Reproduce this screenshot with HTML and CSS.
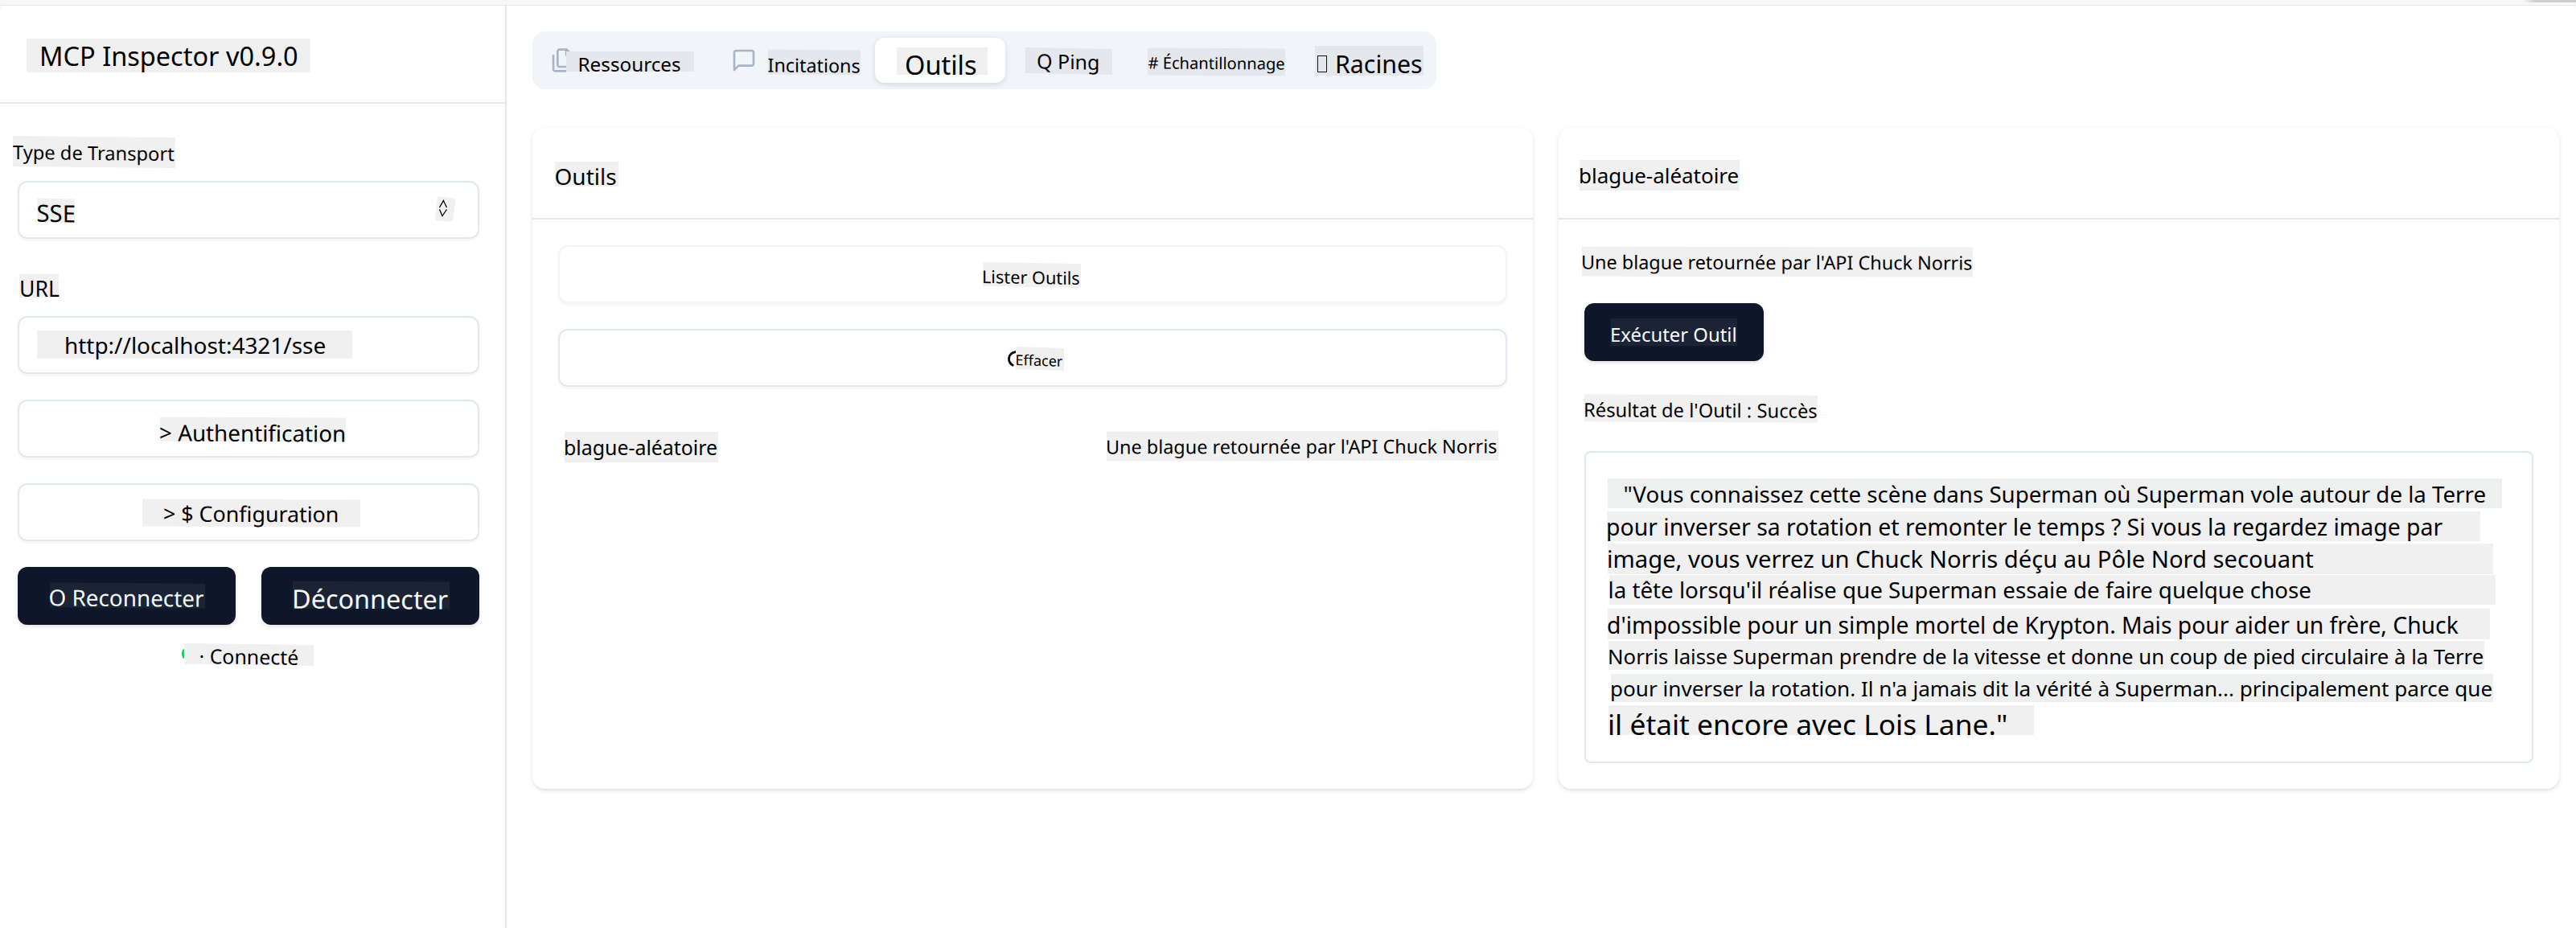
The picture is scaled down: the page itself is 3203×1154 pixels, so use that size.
FILE: index.html
```html
<!DOCTYPE html>
<html lang="fr">
<head>
<meta charset="utf-8">
<title>MCP Inspector</title>
<link rel="stylesheet" href="styles.css">
</head>
<body>
<div class="chrome"><span class="chrome-shade"></span></div>
<div class="app">
  <aside class="sidebar">
    <header class="brand"><h1 class="label l-brand">MCP Inspector v0.9.0</h1></header>
    <div class="form">
      <label class="label l-transport">Type de Transport</label>
      <div class="field">
        <span class="label l-sse">SSE</span>
        <svg class="chevrons" viewBox="0 0 26 32" width="26" height="32"><path fill="#f0f0f0" d="M3.3 0 25.5 3 22 31.500 0 30z"/><path fill="none" stroke="#000" stroke-width="1.300" d="M5.500 14 10.400 5.500 14.500 14M5.500 16.500 9 24.500 14.500 16.500"/></svg>
      </div>
      <label class="label l-url">URL</label>
      <div class="field"><span class="label l-http">http://localhost:4321/sse</span></div>
      <button class="field field-gap"><span class="label l-auth">&gt; Authentification</span></button>
      <button class="field field-gap"><span class="label l-config">&gt; $ Configuration</span></button>
      <div class="actions">
        <button class="primary"><span class="label l-reconnect">O Reconnecter</span></button>
        <button class="primary"><span class="label l-disconnect">Déconnecter</span></button>
      </div>
      <div class="status"><span class="status-dot"></span><span class="label l-status">· Connecté</span></div>
    </div>
  </aside>
  <main class="main">
    <nav class="tabs">
      <span class="tab tab-files">
        <svg class="icon" viewBox="0 0 24 24" width="32" height="32"><path d="M15.500 2H8.600c-.4 0-.8.2-1.100.5-.3.3-.5.7-.5 1.100v12.800c0 .4.2.8.500 1.100.3.3.7.500 1.100.500h9.800c.4 0 .8-.2 1.100-.500.3-.3.500-.7.500-1.100V6.500z"/><path d="M3 7.600v12.800c0 .4.200.8.500 1.100.3.300.7.500 1.100.500h9.800"/><path d="M15 2v5h5"/></svg>
        <span class="label l-resources">Ressources</span>
      </span>
      <span class="tab tab-prompts">
        <svg class="icon" viewBox="0 0 24 24" width="32" height="32"><path d="M21 15a2 2 0 0 1-2 2H7l-4 4V5a2 2 0 0 1 2-2h14a2 2 0 0 1 2 2z"/></svg>
        <span class="label l-prompts">Incitations</span>
      </span>
      <span class="tab tab-active"><span class="label l-tools">Outils</span></span>
      <span class="label l-ping">Q Ping</span>
      <span class="label l-sampling"># Échantillonnage</span>
      <span class="label l-roots"><i class="glyph-box"></i>Racines</span>
    </nav>
    <div class="cards">
      <section class="card">
        <header class="card-head"><h2 class="label l-head-tools">Outils</h2></header>
        <div class="card-body">
          <button class="field field-light"><span class="label l-list">Lister Outils</span></button>
          <button class="field field-gap">
            <svg class="arc" viewBox="0 0 11 20" width="11" height="20"><path fill="none" stroke="#020817" stroke-width="2.800" d="M11 1.300C4 2.500 1.400 6 1.400 10c0 4 2 7 5.800 8.700"/></svg>
            <span class="label l-clear">Effacer</span>
          </button>
          <div class="tool-row">
            <span class="label l-tool">blague-aléatoire</span>
            <span class="label l-tool-desc">Une blague retournée par l'API Chuck Norris</span>
          </div>
        </div>
      </section>
      <section class="card">
        <header class="card-head"><h2 class="label l-head-joke">blague-aléatoire</h2></header>
        <div class="card-body">
          <p class="label l-desc">Une blague retournée par l'API Chuck Norris</p>
          <button class="primary run"><span class="label l-run">Exécuter Outil</span></button>
          <h3 class="label l-result">Résultat de l'Outil : Succès</h3>
          <div class="result">
            <span class="label r1">"Vous connaissez cette scène dans Superman où Superman vole autour de la Terre</span>
            <span class="label r2">pour inverser sa rotation et remonter le temps ? Si vous la regardez image par</span>
            <span class="label r3">image, vous verrez un Chuck Norris déçu au Pôle Nord secouant</span>
            <span class="label r4">la tête lorsqu'il réalise que Superman essaie de faire quelque chose</span>
            <span class="label r5">d'impossible pour un simple mortel de Krypton. Mais pour aider un frère, Chuck</span>
            <span class="label r6">Norris laisse Superman prendre de la vitesse et donne un coup de pied circulaire à la Terre</span>
            <span class="label r7">pour inverser la rotation. Il n'a jamais dit la vérité à Superman... principalement parce que</span>
            <span class="label r8">il était encore avec Lois Lane."</span>
          </div>
        </div>
      </section>
    </div>
  </main>
</div>
</body>
</html>
```
FILE: styles.css
```css
* { box-sizing: border-box; }
body {
  margin: 0;
  height: 1154px;
  overflow: hidden;
  background: #f7f7f7;
  color: #000;
  font-family: "Noto Sans", sans-serif;
}
h1, h2, h3, p { margin: 0; }
button { font: inherit; color: inherit; text-align: left; }

.chrome { height: 7px; border-bottom: 1px solid #e8e8e8; display: flex; justify-content: flex-end; }
.chrome-shade { width: 66px; height: 3px; background: linear-gradient(90deg, #f7f7f7, #cfcfcf 16px, #cbcbcb); }
.app { display: flex; height: 1147px; background: #fff; border-radius: 6px 4px 0 0; }

/* Text chips: fixed box, single line */
.label {
  display: block;
  flex: none;
  padding-top: 1px;
  white-space: nowrap;
  font-weight: 400;
  background: #f0f0f0;
}

/* Sidebar */
.sidebar { width: 630px; flex: none; border-right: 2px solid #e2e8f0; }
.brand { height: 122px; padding: 41px 0 0 33px; border-bottom: 2px solid #e5e7eb; }
.form { padding: 41px 32px 0 22px; display: flex; flex-direction: column; }
.field {
  height: 72px;
  width: 100%;
  padding: 0;
  display: flex;
  align-items: flex-start;
  background: #fff;
  border: 2px solid #e2e8f0;
  border-radius: 12px;
  box-shadow: 0 2px 4px rgba(0, 0, 0, .05);
}
.field-gap { margin-top: 32px; }
.field-light { border-color: #f1f5f9; }
.chevrons { margin: 17px 27px 0 auto; }
.actions { display: flex; gap: 32px; margin-top: 32px; }
.primary {
  flex: 1;
  height: 72px;
  padding: 0;
  border: 0;
  display: flex;
  align-items: flex-start;
  color: #f8fafc;
  background: #0f172a;
  border-radius: 12px;
  box-shadow: 0 2px 5px rgba(0, 0, 0, .12);
}
.primary .label { background: #1c2335; }
.status { display: flex; margin: 24px 0 0 204px; }
.status-dot { width: 2.500px; height: 12px; margin-top: 6px; background: #22c55e; border-radius: 3px 0 0 3px / 6px 0 0 6px; }

.l-brand { width: 353px; height: 42px; font-size: 32.5px; line-height: 41.4px; text-indent: 16px; }
.l-transport { width: 202px; height: 38px; margin: 0 0 17px -6px; font-size: 23.7px; line-height: 38.2px; text-indent: 0; transform: skewY(.6deg); }
.l-sse { width: 47px; height: 30px; margin: 20px 0 0 22px; font-size: 29.3px; line-height: 35.6px; text-indent: -.5px; transform: skewY(1deg); }
.l-url { width: 49px; height: 29px; margin: 44px 0 23px 2px; font-size: 26.6px; line-height: 35px; }
.l-http { width: 392px; height: 35px; margin: 16px 0 0 22px; font-size: 27.95px; line-height: 34.4px; text-indent: 34px; }
.l-auth { width: 231px; height: 30px; margin: 20px 0 0 175px; font-size: 27.8px; line-height: 37.4px; text-indent: -1px; transform: skewY(.25deg); }
.l-config { width: 271px; height: 34px; margin: 18px 0 0 153px; font-size: 26.8px; line-height: 33.2px; text-indent: 26px; transform: skewY(.2deg); }
.l-reconnect { width: 193px; height: 31px; margin: 20px 0 0 40px; font-size: 27.85px; line-height: 35.8px; text-indent: -1.5px; transform: skewY(.4deg); }
.l-disconnect { width: 195px; height: 34px; margin: 18px 0 0 39px; font-size: 32.4px; line-height: 40.2px; text-indent: -1px; transform: skewY(.3deg); }
.l-status { width: 161px; height: 26px; font-size: 24.9px; line-height: 29.2px; text-indent: 18.5px; transform: skewY(.8deg); }

/* Tabs */
.main { flex: 1; padding: 32px 21px 0 32px; }
.tabs {
  width: 1124px;
  height: 72px;
  display: flex;
  align-items: flex-start;
  background: #f1f5f9;
  border-radius: 16px;
}
.tabs > .label, .tab > .label { background: #e4e7ec; }
.tab { display: flex; align-items: flex-start; flex: none; }
.icon { flex: none; fill: none; stroke: #aab4c4; stroke-width: 2; stroke-linecap: round; stroke-linejoin: round; }
.tab-files { margin: 20px 0 0 22px; }
.tab-prompts { margin: 20px 0 0 46px; }
.tabs > .tab-active {
  width: 162px;
  height: 56px;
  margin: 8px 0 0 18px;
  background: #fff;
  border-radius: 12px;
  box-shadow: 0 2px 6px rgba(0, 0, 0, .12);
}
.tab-active > .label { background: #f0f0f0; }

.l-resources { width: 159px; height: 25px; margin: 5px 0 0 -12px; font-size: 24.25px; line-height: 29.8px; text-indent: 14.5px; }
.l-prompts { width: 115px; height: 31px; margin: 3px 0 0 14px; font-size: 23.3px; line-height: 36px; text-indent: -.5px; transform: skewY(.5deg); }
.l-tools { width: 113px; height: 34px; margin: 12px 0 0 27px; font-size: 32.5px; line-height: 41px; text-indent: 10px; }
.l-ping { width: 108px; height: 32px; margin: 21px 0 0 25px; font-size: 25px; line-height: 31.2px; text-indent: 14px; transform: skewY(1deg); }
.l-sampling { width: 171px; height: 34px; margin: 21px 0 0 44px; font-size: 20.14px; line-height: 34px; text-indent: .5px; transform: skewY(.4deg); }
.l-roots { width: 135px; height: 37px; margin: 18px 0 0 37px; padding-left: 3px; display: flex; font-size: 30.3px; line-height: 43px; }
.glyph-box { width: 12px; height: 21px; margin: 11px 10px 0 0; border: 1.500px solid #111; }

/* Cards */
.cards { display: flex; gap: 32px; margin-top: 48px; }
.card {
  width: 1244px;
  height: 822px;
  background: #fff;
  border-radius: 16px;
  box-shadow: 0 2px 6px rgba(0, 0, 0, .1), 0 2px 4px -2px rgba(0, 0, 0, .1);
}
.card-head { height: 114px; border-bottom: 2px solid #e5e7eb; display: flex; align-items: flex-start; }
.card-body { padding: 32px; display: flex; flex-direction: column; }
.tool-row { display: flex; justify-content: space-between; align-items: flex-start; margin: 55px 11px 0 8px; }
.arc { flex: none; margin: 25px 0 0 557px; }
.run { flex: none; width: 223px; margin-top: 33px; }
.result {
  width: 1180px;
  height: 388px;
  margin-top: 36px;
  padding: 32px 0 0 27px;
  border: 2px solid #e2e8f0;
  border-radius: 8px;
}

.l-head-tools { width: 79px; height: 31px; margin: 42px 0 0 28px; font-size: 28px; line-height: 35.2px; text-indent: -.5px; }
.l-list { width: 122px; height: 30px; margin: 20px 0 0 526px; font-size: 21.7px; line-height: 34.2px; text-indent: -1px; transform: skewY(1deg); }
.l-clear { width: 60px; height: 28px; margin: 21px 0 0 -1px; font-size: 18px; line-height: 30px; text-indent: -.5px; transform: skewY(2deg); }
.l-tool { width: 191px; height: 38px; margin-top: 1px; font-size: 24.9px; line-height: 37.2px; text-indent: -1px; }
.l-tool-desc { width: 487px; height: 37px; font-size: 23.4px; line-height: 36.2px; text-indent: -1px; transform: skewY(-.1deg); }
.l-head-joke { width: 199px; height: 38px; margin: 40px 0 0 26px; font-size: 25.95px; line-height: 36.4px; text-indent: -1px; }
.l-desc { width: 486px; height: 37px; margin: 2px 0 0 -3px; font-size: 23.4px; line-height: 36.8px; text-indent: -1px; transform: skewY(.12deg); }
.l-run { width: 157px; height: 34px; margin: 19px 0 0 33px; font-size: 23.9px; line-height: 38px; text-indent: -1px; }
.l-result { width: 290px; height: 34px; margin-top: 42px; font-size: 23.75px; line-height: 37.6px; text-indent: -1px; transform: skewY(.3deg); }

/* Tool output lines */
.r1 { width: 1112px; height: 37px; font-size: 27.68px; line-height: 36.5px; text-indent: 19.5px; background: #eef0ef; }
.r2 { width: 1086px; height: 37px; margin: 4px 0 0 -1px; font-size: 28.42px; line-height: 37px; text-indent: -1px; }
.r3 { width: 1101px; height: 38px; margin-top: 3px; font-size: 29.2px; line-height: 37.4px; text-indent: -1px; }
.r4 { width: 1102px; height: 37px; margin: 1px 0 0 2px; font-size: 27.73px; line-height: 35.9px; text-indent: -1.5px; }
.r5 { width: 1097px; height: 38px; margin-top: 5px; font-size: 28.27px; line-height: 38px; text-indent: -1px; }
.r6 { width: 1089px; height: 36px; margin: 2px 0 0 1px; font-size: 25.74px; line-height: 36.6px; text-indent: -1px; }
.r7 { width: 1097px; height: 35px; margin: 5px 0 0 4px; font-size: 26.1px; line-height: 34.4px; text-indent: -1px; background: #eef0ef; }
.r8 { width: 529px; height: 37px; margin: 4px 0 0 1px; font-size: 35.37px; line-height: 44.6px; text-indent: -1px; }
```
